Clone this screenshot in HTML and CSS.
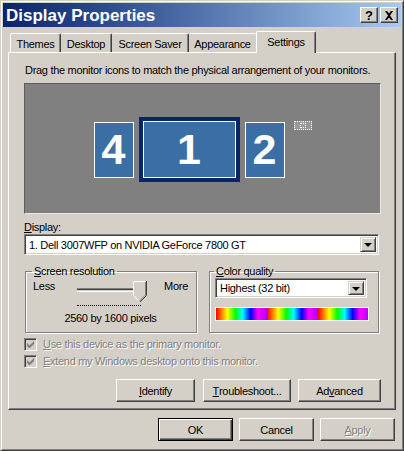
FILE: index.html
```html
<!DOCTYPE html>
<html>
<head>
<meta charset="utf-8">
<link rel="stylesheet" href="styles.css">
</head>
<body>
<div class="window">
  <div class="titlebar">
    <span class="title">Display Properties</span>
    <div class="tbtns">
      <span class="tbtn help">?</span>
      <span class="tbtn close"><svg width="10" height="9" viewBox="0 0 10 9"><path d="M1 0h2l2 2.5L7 0h2L6 4.5 9 9H7L5 6.5 3 9H1l3-4.5z" fill="#000"/></svg></span>
    </div>
  </div>

  <div class="tabs">
    <div class="tab w-themes">Themes</div>
    <div class="tab w-desktop">Desktop</div>
    <div class="tab w-saver">Screen Saver</div>
    <div class="tab w-appear">Appearance</div>
    <div class="tab active">Settings</div>
  </div>

  <div class="panel">
    <p class="hint">Drag the monitor icons to match the physical arrangement of your monitors.</p>

    <div class="monarea">
      <div class="mons">
        <div class="mon">4</div>
        <div class="mon primary"><div class="inner">1</div></div>
        <div class="mon">2</div>
        <div class="ghost"><span></span></div>
      </div>
    </div>

    <div class="lbl"><u>D</u>isplay:</div>
    <div class="combo wide">
      <span class="ctext">1. Dell 3007WFP on NVIDIA GeForce 7800 GT</span>
      <span class="carrow"><i></i></span>
    </div>

    <div class="groups">
      <fieldset class="grp res">
        <legend><u>S</u>creen resolution</legend>
        <div class="sliderrow">
          <span>Less</span>
          <div class="slider">
            <div class="track"></div>
            <svg class="thumb" width="14" height="21" viewBox="0 0 14 21">
              <path d="M0 0H13V14L6.5 20.5L0 14Z" fill="#D4D0C8"/>
              <path d="M0.5 14V0.5H12.5" fill="none" stroke="#fff"/>
              <path d="M0.5 14.5L6 20" fill="none" stroke="#fff"/>
              <path d="M13.5 0V14.5L7 21" fill="none" stroke="#404040"/>
              <path d="M12.5 1V14L6.5 20" fill="none" stroke="#808080"/>
            </svg>
            <div class="ticks"></div>
          </div>
          <span>More</span>
        </div>
        <div class="resval">2560 by 1600 pixels</div>
      </fieldset>

      <fieldset class="grp col">
        <legend><u>C</u>olor quality</legend>
        <div class="combo small">
          <span class="ctext">Highest (32 bit)</span>
          <span class="carrow"><i></i></span>
        </div>
        <div class="rainbow"></div>
      </fieldset>
    </div>

    <div class="checks">
      <div class="chk"><span class="box"><svg width="7" height="7" viewBox="0 0 7 7"><path d="M0 2v3l2 2h1l4-4V0L2.5 4.5z" fill="#808080"/></svg></span><span class="dis"><u>U</u>se this device as the primary monitor.</span></div>
      <div class="chk"><span class="box"><svg width="7" height="7" viewBox="0 0 7 7"><path d="M0 2v3l2 2h1l4-4V0L2.5 4.5z" fill="#808080"/></svg></span><span class="dis"><u>E</u>xtend my Windows desktop onto this monitor.</span></div>
    </div>

    <div class="pbtns">
      <div class="btn b-ident"><u>I</u>dentify</div>
      <div class="btn b-trouble"><u>T</u>roubleshoot...</div>
      <div class="btn b-adv">Ad<u>v</u>anced</div>
    </div>
  </div>

  <div class="footer">
    <div class="btn def">OK</div>
    <div class="btn">Cancel</div>
    <div class="btn disabled"><u>A</u>pply</div>
  </div>
</div>
</body>
</html>
```

FILE: styles.css
```css
* { box-sizing: border-box; }
html, body { margin: 0; padding: 0; }
body {
  width: 404px;
  height: 451px;
  overflow: hidden;
  background: #D4D0C8;
  font-family: "Liberation Sans", Arial, sans-serif;
  font-size: 11px;
  letter-spacing: -0.3px;
  color: #000;
}
u { text-decoration: underline; text-underline-offset: 1px; }

.window {
  width: 404px;
  height: 451px;
  background: #D4D0C8;
  border: 1px solid;
  border-color: #D4D0C8 #404040 #404040 #D4D0C8;
  box-shadow: inset 1px 1px #fff, inset -1px -1px #808080;
  padding: 2px;
  display: flex;
  flex-direction: column;
}

.titlebar {
  height: 24px;
  background: linear-gradient(to right, #0A246A, #3A5A98 35%, #A6CAF0);
  display: flex;
  align-items: center;
  justify-content: space-between;
  padding: 0 3px 0 3px;
}
.title {
  color: #fff;
  font-weight: bold;
  font-size: 17px;
  letter-spacing: 0;
  padding-top: 1px;
}
.tbtns { display: flex; gap: 2px; }
.tbtn {
  width: 18px;
  height: 16px;
  background: #D4D0C8;
  border: 1px solid;
  border-color: #fff #404040 #404040 #fff;
  box-shadow: inset -1px -1px #808080;
  display: flex;
  align-items: center;
  justify-content: center;
  font-weight: bold;
  font-size: 13px;
  letter-spacing: 0;
  line-height: 1;
}

.tabs {
  display: flex;
  align-items: flex-end;
  height: 25px;
  padding-left: 7px;
  position: relative;
  z-index: 2;
}
.tab {
  height: 19px;
  border: 1px solid;
  border-bottom: none;
  border-color: #fff #404040 #fff #fff;
  box-shadow: inset -1px 0 #808080;
  border-radius: 2px 2px 0 0;
  display: flex;
  align-items: center;
  justify-content: center;
  padding-top: 1px;
  white-space: nowrap;
}
.tab + .tab { border-left: none; }
.w-themes { width: 51px; }
.w-desktop { width: 51px; }
.w-saver { width: 77px; }
.w-appear { width: 67px; border-right: none; box-shadow: none; }
.tab.active {
  width: 60px;
  height: 22px;
  margin-bottom: -1px;
  border-left: 1px solid #fff;
  background: #D4D0C8;
  padding-bottom: 3px;
}

.panel {
  margin: 0 5px 0 5px;
  height: 358px;
  border: 1px solid;
  border-color: #fff #404040 #404040 #fff;
  box-shadow: inset -1px -1px #808080;
  padding: 11px 14px 0 15px;
  display: flex;
  flex-direction: column;
}
.hint { margin: 0; line-height: 13px; white-space: nowrap; padding-left: 1px; }

.monarea {
  margin-top: 6px;
  height: 131px;
  background: #808080;
  border: 1px solid;
  border-color: #5a5a5a #e8e8e8 #e8e8e8 #5a5a5a;
  display: flex;
  align-items: center;
  justify-content: center;
}
.mons {
  display: flex;
  align-items: center;
  gap: 5px;
  margin-top: 2px;
}
.mon {
  width: 40px;
  height: 56px;
  background: #3A6EA5;
  border: 1px solid #fff;
  color: #fff;
  font-weight: bold;
  font-size: 43px;
  letter-spacing: 0;
  display: flex;
  align-items: center;
  justify-content: center;
  line-height: 1;
}
.mon.primary {
  width: 101px;
  height: 65px;
  border: 4px solid #0A246A;
}
.mon.primary .inner {
  width: 100%;
  height: 100%;
  border: 1px solid #fff;
  display: flex;
  align-items: center;
  justify-content: center;
}
.ghost {
  align-self: flex-start;
  margin-left: 4px;
  margin-top: 4px;
  width: 18px;
  height: 9px;
  border: 1px dotted #fff;
  background: #9a9a9a;
  display: flex;
  align-items: center;
  justify-content: center;
}
.ghost span {
  width: 6px;
  height: 5px;
  border: 1px dotted #fff;
}

.lbl { margin-top: 7px; line-height: 13px; }

.combo {
  background: #fff;
  border: 1px solid;
  border-color: #808080 #fff #fff #808080;
  box-shadow: inset 1px 1px #404040, inset -1px -1px #D4D0C8;
  display: flex;
  align-items: center;
  justify-content: space-between;
  padding: 2px;
}
.combo.wide { height: 21px; width: 355px; }
.ctext { padding-left: 2px; white-space: nowrap; }
.carrow {
  width: 16px;
  height: 100%;
  background: #D4D0C8;
  border: 1px solid;
  border-color: #D4D0C8 #404040 #404040 #D4D0C8;
  box-shadow: inset 1px 1px #fff, inset -1px -1px #808080;
  display: flex;
  align-items: center;
  justify-content: center;
}
.carrow i {
  width: 0;
  height: 0;
  border-left: 4px solid transparent;
  border-right: 4px solid transparent;
  border-top: 4px solid #000;
  margin-top: 1px;
}

.groups {
  display: flex;
  gap: 12px;
  margin-top: 10px;
  padding-left: 1px;
}
.grp {
  margin: 0;
  border: 1px solid #808080;
  box-shadow: inset 1px 1px #fff, 1px 1px #fff;
  height: 68px;
  padding: 0 8px;
}
.grp legend {
  padding: 0 2px;
  margin-left: -1px;
  line-height: 13px;
}
.res { width: 172px; padding-left: 7px; }
.col { width: 170px; padding-left: 5px; }

.sliderrow {
  display: flex;
  align-items: flex-start;
  justify-content: space-between;
  line-height: 13px;
  margin-top: 2px;
}
.slider {
  position: relative;
  width: 70px;
  height: 28px;
  margin-left: 6px;
  margin-right: 2px;
}
.track {
  position: absolute;
  left: 0;
  right: 0;
  top: 8px;
  height: 4px;
  border-top: 1px solid #808080;
  border-bottom: 1px solid #fff;
  box-shadow: inset 0 1px #404040, inset 0 -1px #D4D0C8;
}
.thumb { position: absolute; left: 56px; top: 1px; }
.ticks {
  position: absolute;
  left: 0;
  top: 25px;
  width: 64px;
  border-top: 1px dotted #000;
}
.resval { text-align: center; line-height: 13px; margin-top: 4px; }

.combo.small { height: 20px; width: 152px; }
.rainbow {
  margin-top: 9px;
  width: 154px;
  height: 14px;
  border: 1px solid #fff;
  background: linear-gradient(to right, #f00 0%, #f80 12%, #ff0 22%, #0f0 38%, #0ff 52%, #00f 68%, #f0f 82%, #a0f 100%);
  background-size: 51px 100%;
  background-repeat: repeat-x;
}

.checks {
  margin-top: 4px;
  display: flex;
  flex-direction: column;
  gap: 3px;
}
.chk { display: flex; align-items: center; gap: 6px; height: 14px; }
.box {
  width: 13px;
  height: 13px;
  background: #D4D0C8;
  border: 1px solid;
  border-color: #808080 #fff #fff #808080;
  box-shadow: inset 1px 1px #404040, inset -1px -1px #D4D0C8;
  display: flex;
  align-items: center;
  justify-content: center;
}
.dis { color: #808080; text-shadow: 1px 1px #fff; }

.pbtns {
  display: flex;
  justify-content: flex-end;
  gap: 8px;
  margin-top: 11px;
}
.btn {
  height: 23px;
  width: 75px;
  background: #D4D0C8;
  border: 1px solid;
  border-color: #fff #404040 #404040 #fff;
  box-shadow: inset -1px -1px #808080;
  display: flex;
  align-items: center;
  justify-content: center;
  white-space: nowrap;
}
.b-ident { width: 79px; }
.b-trouble { width: 88px; }
.b-adv { width: 83px; margin-left: -1px; }

.footer {
  display: flex;
  justify-content: flex-end;
  gap: 6px;
  padding: 8px 6px 0 0;
}
.btn.def {
  border: 1px solid #000;
  box-shadow: inset 1px 1px #fff, inset -1px -1px #404040, inset -2px -2px #808080;
}
.btn.disabled { color: #808080; text-shadow: 1px 1px #fff; }
```
